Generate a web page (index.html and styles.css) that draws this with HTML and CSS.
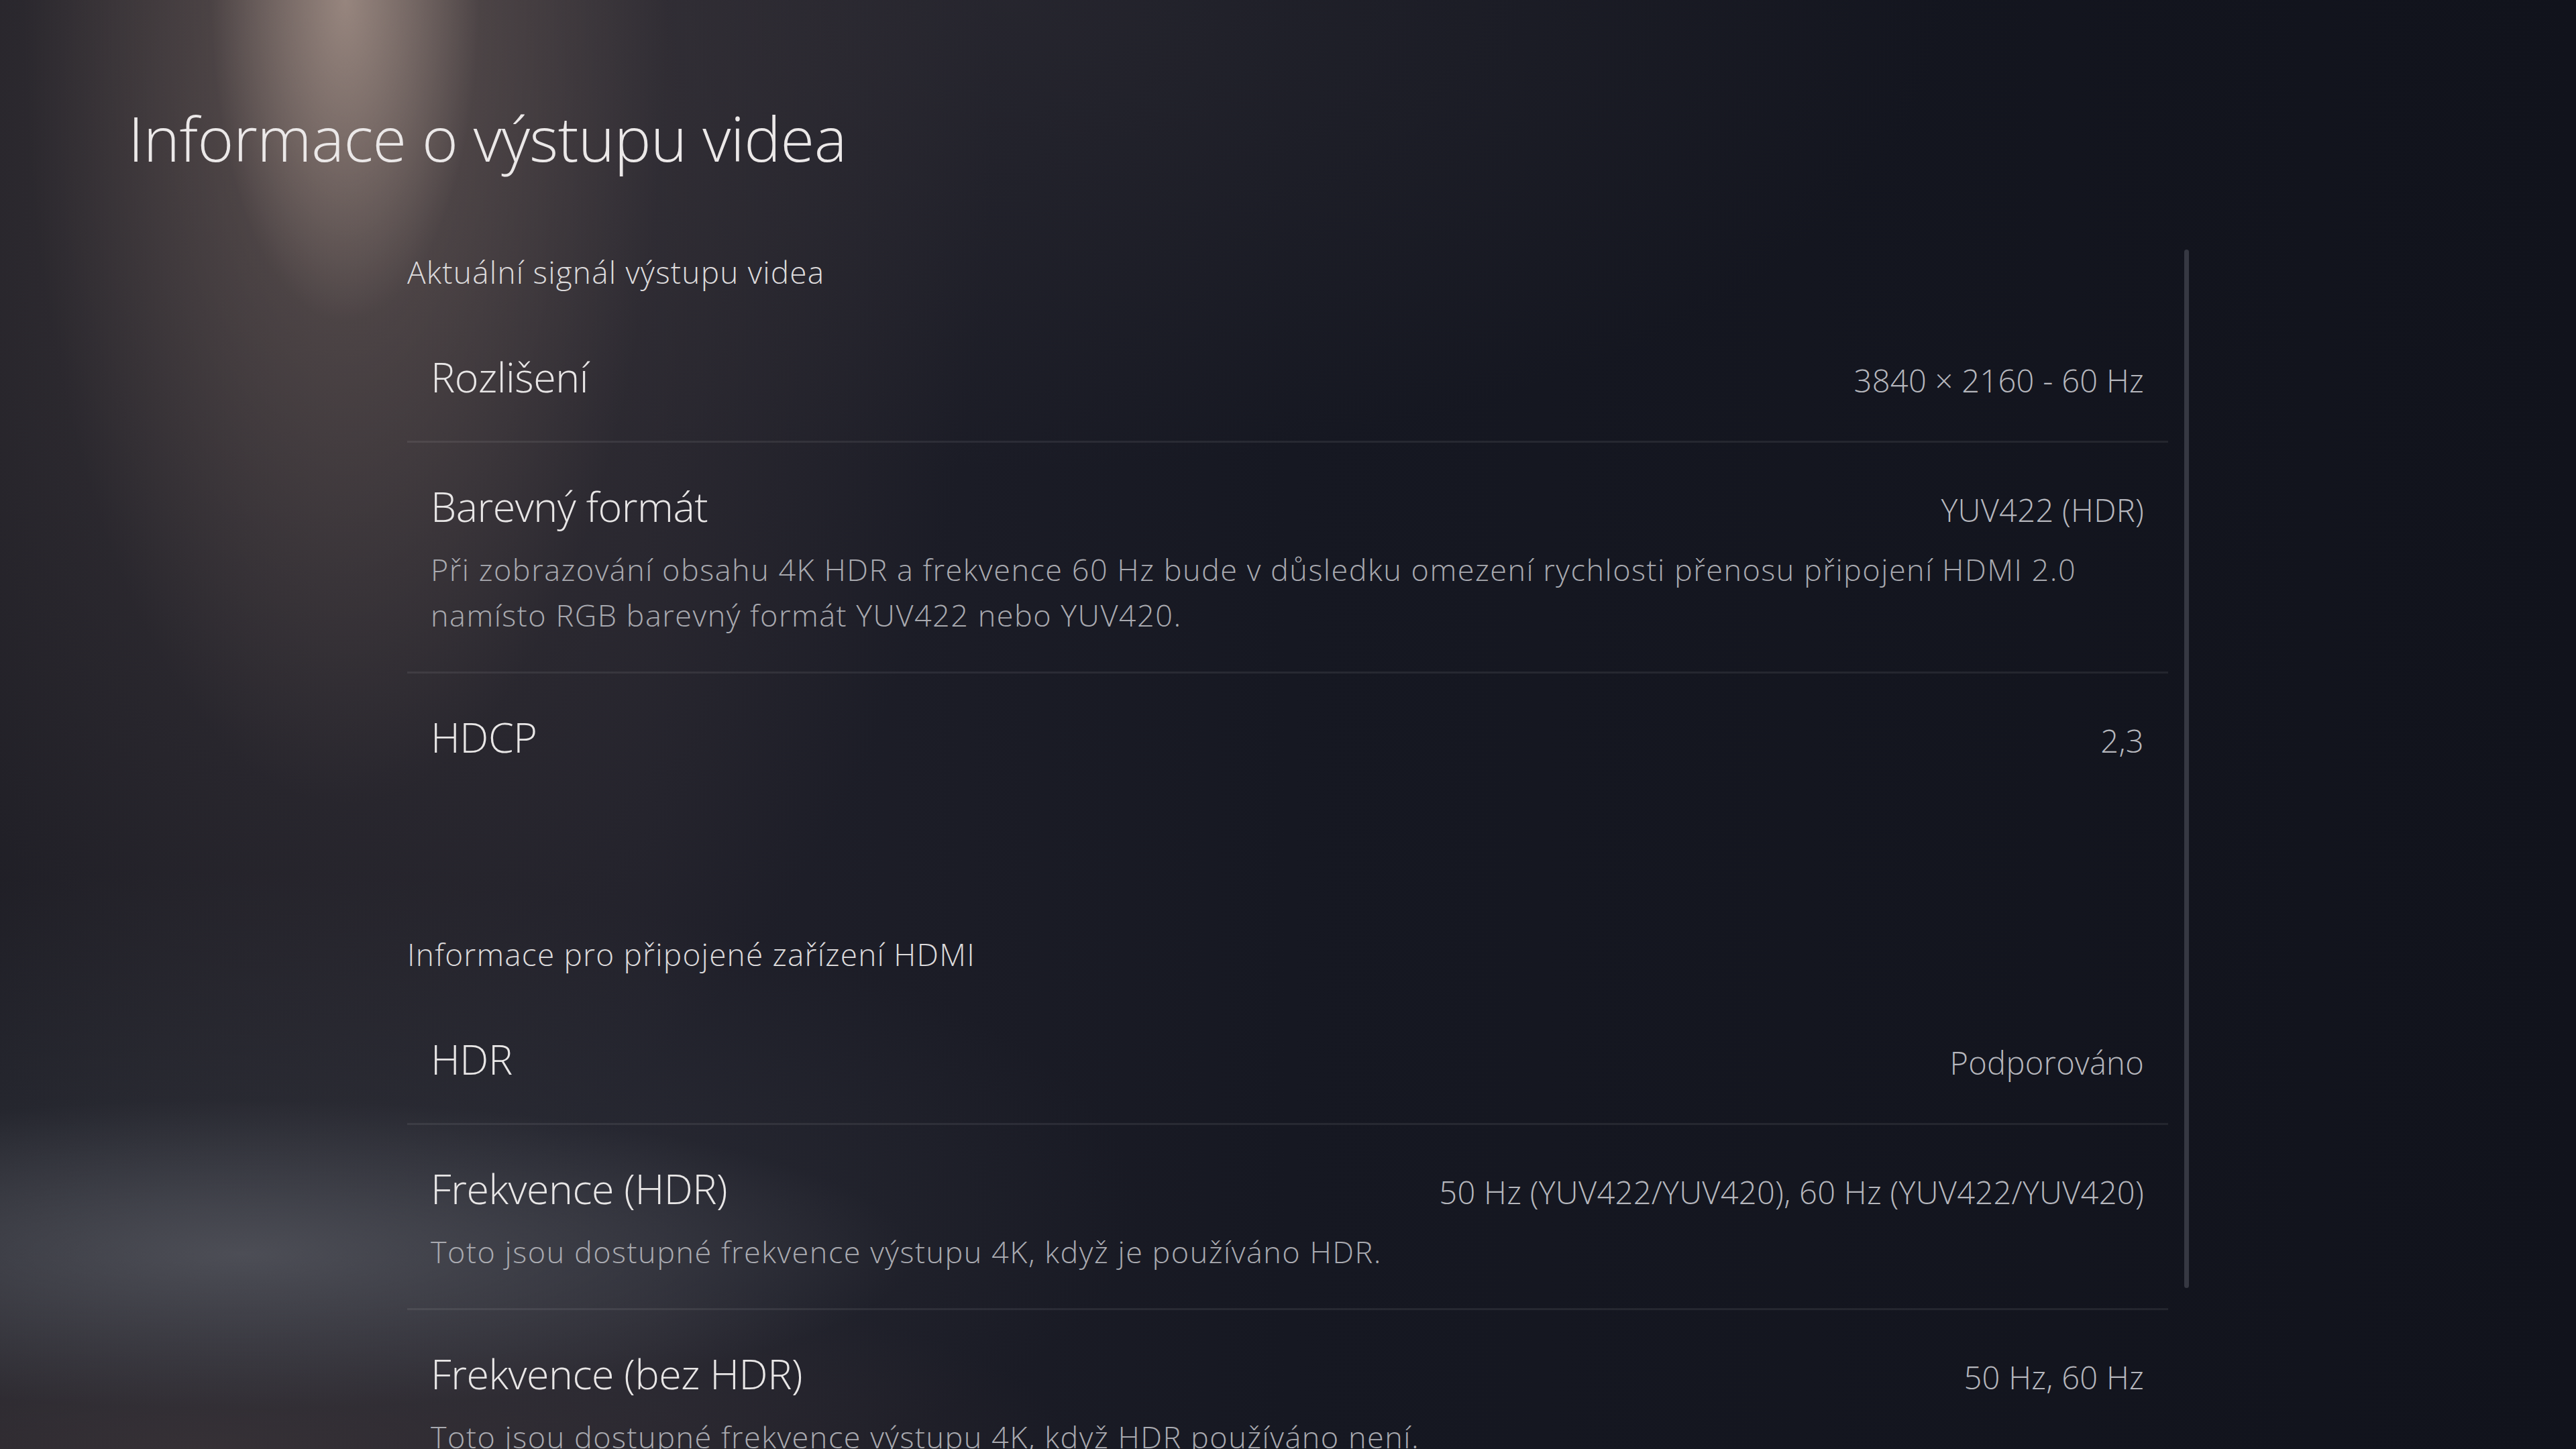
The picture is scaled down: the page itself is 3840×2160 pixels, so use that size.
FILE: index.html
```html
<!DOCTYPE html>
<html lang="cs">
<head>
<meta charset="utf-8">
<title>Informace o výstupu videa</title>
<link rel="stylesheet" href="styles.css">
</head>
<body>
<div class="screen">
  <h1 class="title">Informace o výstupu videa</h1>
  <div class="content">
    <div class="list">
      <section class="group">
        <h2 class="group-title">Aktuální signál výstupu videa</h2>
        <div class="row">
          <div class="row-main"><span class="label">Rozlišení</span><span class="value">3840 × 2160 - 60 Hz</span></div>
        </div>
        <div class="row">
          <div class="row-main"><span class="label">Barevný formát</span><span class="value">YUV422 (HDR)</span></div>
          <p class="desc">Při zobrazování obsahu 4K HDR a frekvence 60 Hz bude v důsledku omezení rychlosti přenosu připojení HDMI 2.0 namísto RGB barevný formát YUV422 nebo YUV420.</p>
        </div>
        <div class="row">
          <div class="row-main"><span class="label">HDCP</span><span class="value">2,3</span></div>
        </div>
      </section>
      <section class="group">
        <h2 class="group-title">Informace pro připojené zařízení HDMI</h2>
        <div class="row">
          <div class="row-main"><span class="label">HDR</span><span class="value">Podporováno</span></div>
        </div>
        <div class="row">
          <div class="row-main"><span class="label">Frekvence (HDR)</span><span class="value">50 Hz (YUV422/YUV420), 60 Hz (YUV422/YUV420)</span></div>
          <p class="desc">Toto jsou dostupné frekvence výstupu 4K, když je používáno HDR.</p>
        </div>
        <div class="row">
          <div class="row-main"><span class="label">Frekvence (bez HDR)</span><span class="value">50 Hz, 60 Hz</span></div>
          <p class="desc">Toto jsou dostupné frekvence výstupu 4K, když HDR používáno není.</p>
        </div>
      </section>
    </div>
    <div class="scrollbar"></div>
  </div>
</div>
</body>
</html>
```

FILE: styles.css
```css
html, body {
  margin: 0;
  padding: 0;
}

body {
  width: 3840px;
  height: 2160px;
  overflow: hidden;
  font-family: "Open Sans", "Noto Sans", "DejaVu Sans", sans-serif;
  font-weight: 300;
  color: #e6e4e4;
}

.screen {
  width: 3840px;
  height: 2160px;
  box-sizing: border-box;
  padding: 151px 0 0 191px;
  overflow: hidden;
  background:
    radial-gradient(ellipse 200px 480px at 515px 0px, rgba(175, 155, 145, 0.7), rgba(175, 155, 145, 0) 100%),
    radial-gradient(ellipse 480px 1200px at 515px 0px, rgba(125, 108, 102, 0.55), rgba(125, 108, 102, 0) 100%),
    radial-gradient(ellipse 1000px 1600px at 480px 200px, rgba(82, 72, 72, 0.5), rgba(82, 72, 72, 0) 100%),
    radial-gradient(ellipse 1000px 230px at 360px 1870px, rgba(95, 96, 104, 0.65), rgba(95, 96, 104, 0) 100%),
    radial-gradient(ellipse 1400px 500px at 300px 1800px, rgba(60, 64, 72, 0.45), rgba(60, 64, 72, 0) 100%),
    radial-gradient(ellipse 1300px 300px at 300px 2160px, rgba(72, 60, 62, 0.55), rgba(72, 60, 62, 0) 100%),
    radial-gradient(ellipse 1400px 700px at 1500px 0px, rgba(60, 56, 62, 0.35), rgba(60, 56, 62, 0) 100%),
    linear-gradient(90deg, #1c1c24 0%, #20202a 25%, #161822 50%, #11131c 100%);
}

.title {
  margin: 0;
  font-size: 92px;
  font-weight: 300;
  line-height: 110px;
  letter-spacing: -0.5px;
  color: #ebe8e8;
}

.content {
  display: flex;
  align-items: flex-start;
  margin-top: 111px;
  padding-left: 416px;
}

.list {
  width: 2625px;
  padding-top: 3px;
}

.scrollbar {
  width: 7px;
  height: 1548px;
  margin-left: 24px;
  border-radius: 4px;
  background: #363842;
}

.group + .group {
  margin-top: 198px;
}

.group-title {
  margin: 0 0 32px 0;
  font-size: 46px;
  font-weight: 300;
  line-height: 60px;
  color: #dcdadb;
  letter-spacing: 1.2px;
}

.row {
  padding: 55px 36px 50px 35px;
  border-bottom: 3px solid rgba(255, 255, 255, 0.075);
}

.row:last-child {
  border-bottom: none;
}

.row-main {
  display: flex;
  align-items: baseline;
  justify-content: space-between;
}

.label {
  font-size: 61px;
  line-height: 80px;
  color: #e8e6e6;
  letter-spacing: -0.5px;
}

.value {
  font-size: 47px;
  line-height: 80px;
  color: #b6b7bd;
  letter-spacing: 0.3px;
}

.desc {
  margin: 15px 0 0 0;
  font-size: 45px;
  line-height: 68px;
  color: #a9aab0;
  letter-spacing: 1.5px;
}
```
